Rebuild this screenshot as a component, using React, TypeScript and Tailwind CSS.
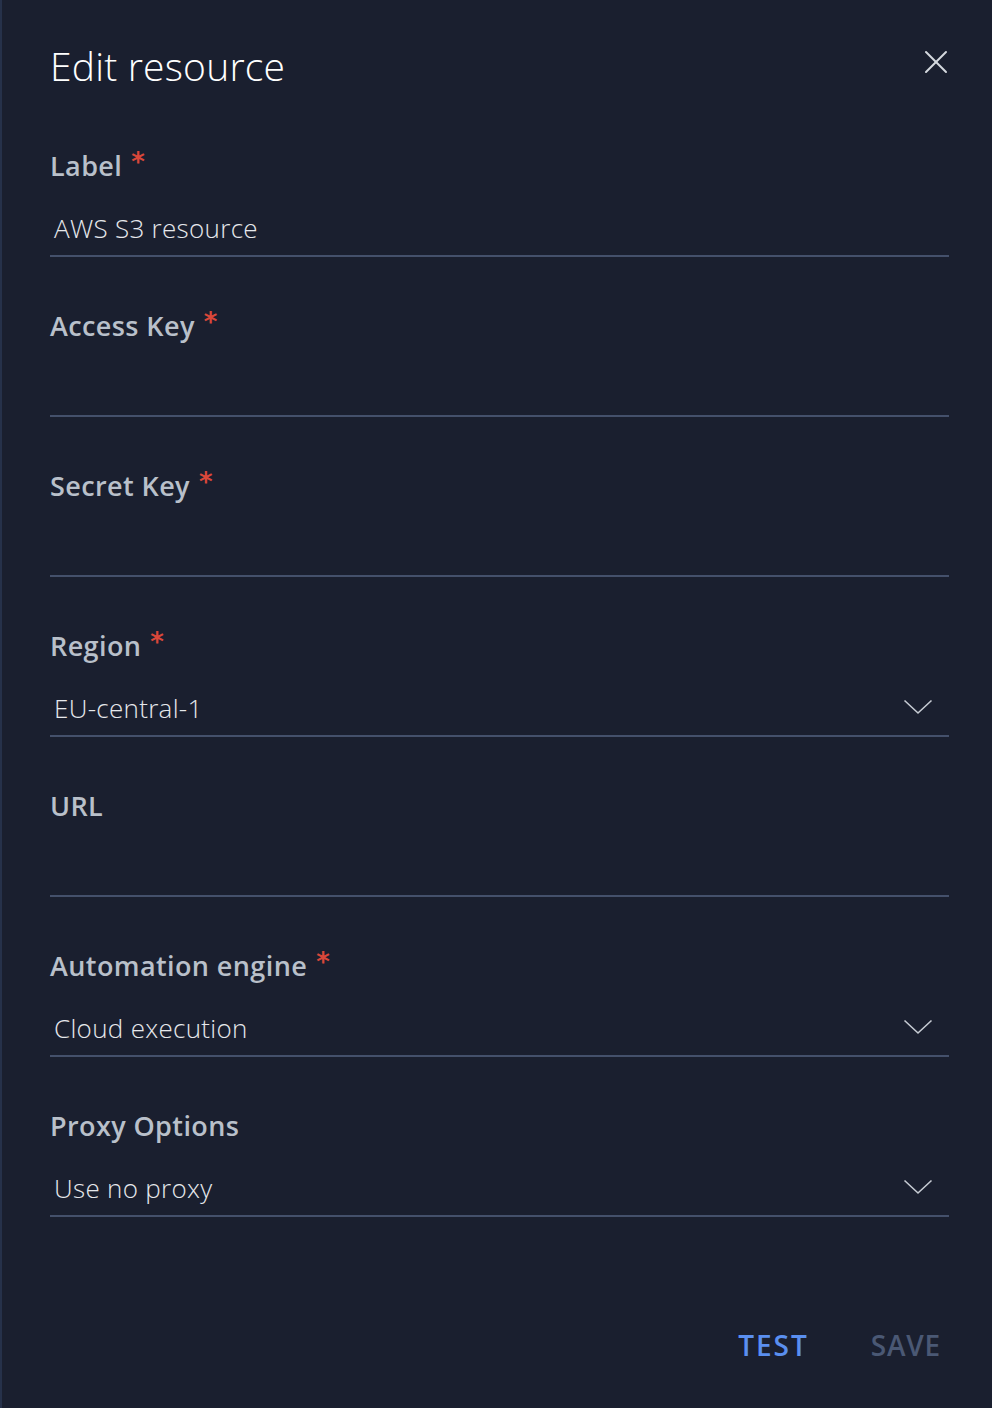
import { X } from 'lucide-react';

interface Field {
  label: string;
  required?: boolean;
  value?: string;
  select?: boolean;
}

const fields: Field[] = [
  { label: 'Label', required: true, value: 'AWS S3 resource' },
  { label: 'Access Key', required: true },
  { label: 'Secret Key', required: true },
  { label: 'Region', required: true, value: 'EU-central-1', select: true },
  { label: 'URL' },
  { label: 'Automation engine', required: true, value: 'Cloud execution', select: true },
  { label: 'Proxy Options', value: 'Use no proxy', select: true },
];

const Chevron = () => (
  <svg width="30" height="16" viewBox="0 0 30 16" fill="none" className="text-[#c6cbd3] -mt-1">
    <polyline points="1.5,1.5 15,14 28.5,1.5" stroke="currentColor" strokeWidth="1.6" />
  </svg>
);

const FormField = ({ field }: { field: Field }) => {
  return (
    <div className="mb-[53px]">
      <div className="h-8 flex items-center text-[27px] font-semibold text-[#b9c0ca] tracking-[0.4px]">
        {field.label}
        {field.required && (
          <span className="ml-[9px] text-[26px] leading-none text-[#d9473a] -mt-[8px]" style={{ fontFamily: '"DejaVu Sans", sans-serif' }}>
            *
          </span>
        )}
      </div>
      <div className="mt-5 h-[55px] flex items-center justify-between border-b-2 border-[#44506b] pl-1 pr-4">
        <span className="text-[26px] font-light text-[#e6e8ec] tracking-[0.3px]">{field.value}</span>
        {field.select && <Chevron />}
      </div>
    </div>
  );
};

export default function App() {
  return (
    <div
      className="w-[992px] h-[1408px] bg-[#1a1f2f] border-l-2 border-[#26314a] flex flex-col"
      style={{ fontFamily: '"Open Sans", Lato, sans-serif' }}
    >
      <div className="pl-12 pr-[43px] pt-[42px] flex items-center justify-between">
        <h1 className="h-12 flex items-center text-[39px] font-light text-white tracking-[0.2px]">Edit resource</h1>
        <X className="w-10 h-10 text-[#d5d9df] -mt-2 -mr-[7px]" strokeWidth={1.2} />
      </div>
      <div className="pl-12 pr-[43px] mt-[60px]">
        {fields.map((f) => (
          <FormField key={f.label} field={f} />
        ))}
      </div>
      <div className="flex justify-end items-center gap-[62px] pr-[51px] mt-[54px]">
        <button className="text-[28px] font-semibold tracking-[2px] text-[#5a8ff0]">TEST</button>
        <button className="text-[28px] font-semibold tracking-[0.8px] text-[#4a5874]">SAVE</button>
      </div>
    </div>
  );
}
